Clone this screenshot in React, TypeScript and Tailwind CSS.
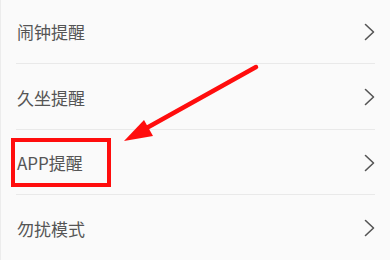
const items = ['闹钟提醒', '久坐提醒', 'APP提醒', '勿扰模式'];

function Chevron() {
    return (
        <svg width="11" height="18" viewBox="0 0 11 18" fill="none" aria-hidden="true">
            <path d="M1.5 1.5 L9.5 9 L1.5 16.5" stroke="#555" strokeWidth="1.6" strokeLinecap="round" strokeLinejoin="round" />
        </svg>
    );
}

function Arrow() {
    return (
        <svg className="pointer-events-none absolute inset-0" width="390" height="260" viewBox="0 0 390 260" aria-hidden="true">
            <line x1="255" y1="67" x2="142" y2="130" stroke="#ff0d0d" strokeWidth="4.5" strokeLinecap="round" />
            <polygon points="123,141 143,120 152,136" fill="#ff0d0d" />
        </svg>
    );
}

export default function App() {
    return (
        <div
            className="relative h-[260px] w-[390px] overflow-hidden border-l border-[#ececec] bg-[#fafafa]"
            style={{ fontFamily: '"Noto Sans CJK SC", "Noto Sans", sans-serif' }}
        >
            <ul className="-mt-[1.5px] flex flex-col">
                {items.map((label) => (
                    <li key={label} className="ml-[15px] mr-[15px]">
                        <div className="flex h-[65.5px] items-center justify-between border-b border-[#e9e9e9] pl-px pt-[2px]">
                            <span className="text-[17px] leading-none text-[#555]">{label}</span>
                            <Chevron />
                        </div>
                    </li>
                ))}
            </ul>
            {/* annotation overlay */}
            <div className="absolute left-[10px] top-[138px] h-[49px] w-[100px] border-4 border-[#ff0d0d]" />
            <Arrow />
        </div>
    );
}
